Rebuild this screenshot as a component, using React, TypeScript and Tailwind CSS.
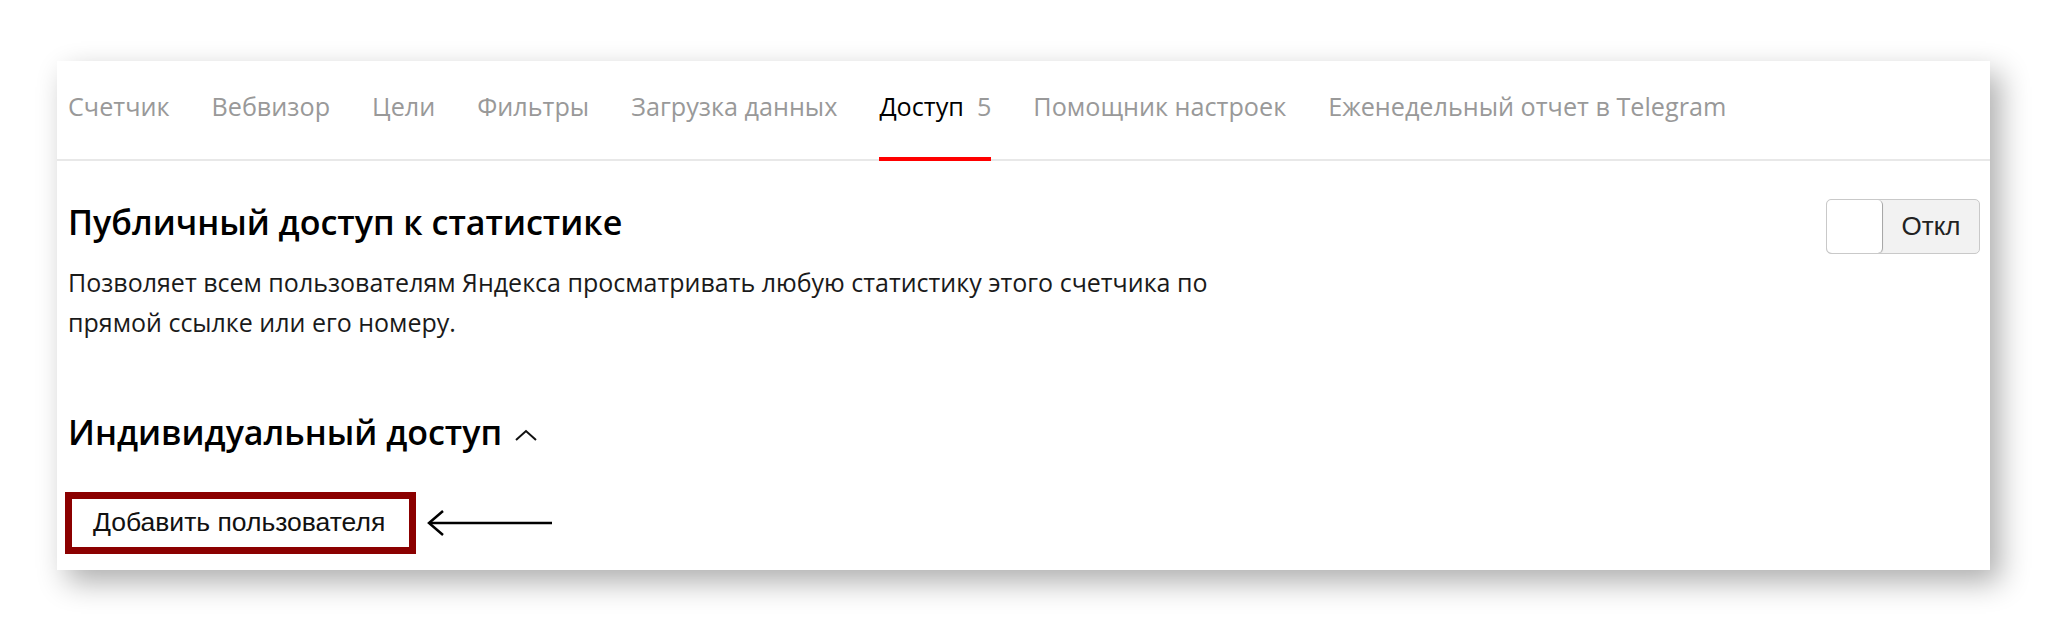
import { ReactNode } from 'react';

const tabs = [
    { label: 'Счетчик' },
    { label: 'Вебвизор' },
    { label: 'Цели' },
    { label: 'Фильтры' },
    { label: 'Загрузка данных' },
    { label: 'Доступ', count: 5, active: true },
    { label: 'Помощник настроек' },
    { label: 'Еженедельный отчет в Telegram' },
];

function Tab({ label, count, active }: { label: string; count?: number; active?: boolean }) {
    return (
        <div
            className={`flex h-[100px] items-start pt-[28px] -mb-[2px] border-b-[4px] ${
                active ? 'border-[#ff0000] text-black' : 'border-transparent text-[#999999]'
            }`}
        >
            <span>{label}</span>
            {count !== undefined && <span className="ml-[13px] text-[#999999]">{count}</span>}
        </div>
    );
}

function Toggle() {
    return (
        <div className="flex h-[55px] w-[154px] overflow-hidden rounded-[5px] border border-[#c9c9c9] bg-[#f2f2f2]">
            <div className="h-full w-[56px] rounded-[5px] border-r border-[#a8a8a8] bg-white shadow-[0_1px_1px_rgba(0,0,0,0.15)]" />
            <div className="flex flex-1 items-center justify-center font-['Liberation_Sans',Arial,sans-serif] text-[26px] text-[#222]">
                Откл
            </div>
        </div>
    );
}

function Section({ children }: { children: ReactNode }) {
    return <div className="pl-[11px] pr-[10px]">{children}</div>;
}

export default function App() {
    return (
        <div className="h-[633px] w-full bg-white pl-[57px] pt-[61px] font-['Open_Sans',sans-serif]">
            <div className="h-[509px] w-[1933px] bg-white shadow-[10px_12px_28px_rgba(0,0,0,0.32)]">
                {/* Tabs */}
                <div className="flex gap-[42px] border-b-2 border-[#e8e8e8] pl-[11px] text-[25.2px] leading-[34px]">
                    {tabs.map((t) => (
                        <Tab key={t.label} {...t} />
                    ))}
                </div>

                <Section>
                    {/* Public access */}
                    <div className="mt-[38px] flex items-start justify-between">
                        <div>
                            <h2 className="text-[34px] font-semibold leading-[46px] text-black">
                                Публичный доступ к статистике
                            </h2>
                            <p className="mt-[17px] text-[25px] leading-[40px] text-[#1a1a1a]">
                                Позволяет всем пользователям Яндекса просматривать любую статистику этого счетчика по
                                <br />
                                прямой ссылке или его номеру.
                            </p>
                        </div>
                        <Toggle />
                    </div>

                    {/* Individual access */}
                    <div className="mt-[67px] flex items-center gap-[12px]">
                        <h2 className="text-[34px] font-semibold leading-[46px] text-black">Индивидуальный доступ</h2>
                        <svg width="24" height="14" viewBox="0 0 24 14" fill="none" className="mt-[6px]">
                            <path d="M2 12 L12 3 L22 12" stroke="#111" strokeWidth="2" />
                        </svg>
                    </div>

                    <div className="mt-[37px] flex items-center gap-[11px]">
                        <button className="-ml-[3px] flex h-[62px] w-[351px] items-center border-[7px] border-[#8b0000] bg-white pl-[21px] font-['Liberation_Sans',Arial,sans-serif] text-[26.5px] text-[#111]">
                            Добавить пользователя
                        </button>
                        <svg width="126" height="28" viewBox="0 0 126 28" fill="none">
                            <path d="M2 14 H125" stroke="#000" strokeWidth="2.5" />
                            <path d="M16 2 L2 14 L16 26" stroke="#000" strokeWidth="2.5" />
                        </svg>
                    </div>
                </Section>
            </div>
        </div>
    );
}
